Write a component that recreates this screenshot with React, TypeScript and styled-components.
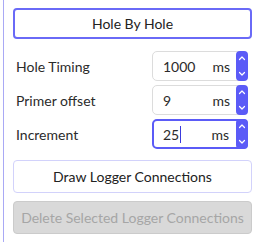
import React from "react";
import styled, { createGlobalStyle } from "styled-components";

const Global = createGlobalStyle`
  html, body { margin: 0; padding: 0; background: #ffffff; }
  body { font-family: Lato, "Noto Sans", sans-serif; color: #2b2b2b; }
`;

const Panel = styled.div`
  margin-left: 3px;
  width: 239px;
  height: 239px;
  border-left: 1px solid #a9a9f5;
  padding: 8px 0 0 9px;
  display: flex;
  flex-direction: column;
`;

const ModeButton = styled.button<{ $variant?: "primary" | "outline" | "disabled" }>`
  box-sizing: border-box;
  width: 239px;
  font-family: Lato, sans-serif;
  font-size: 14px;
  white-space: nowrap;
  border-radius: 4px;
  padding: 0;
  display: flex;
  align-items: center;
  justify-content: center;
  ${({ $variant }) =>
    $variant === "primary"
      ? `height: 31px; background:#fff; border:2px solid #6a6af7; color:#222;`
      : $variant === "disabled"
      ? `height: 33px; background:#d9d9d9; border:1px solid #cbcbcb; color:#a6a6a6;`
      : `height: 33px; background:#fff; border:1px solid #d2d2fb; color:#222;`}
`;

const Fields = styled.div`
  display: flex;
  flex-direction: column;
  gap: 4px;
  margin: 12px 0 11px;
`;

const Row = styled.div`
  display: flex;
  align-items: center;
  justify-content: space-between;
  height: 30px;
  padding-right: 4px;
`;

const Label = styled.span`
  font-size: 14px;
  padding-left: 3px;
`;

const InputBox = styled.div<{ $focused?: boolean }>`
  position: relative;
  box-sizing: border-box;
  width: 96px;
  height: 30px;
  border-radius: 5px;
  border: ${({ $focused }) => ($focused ? "2px solid #5b5bf7" : "1px solid #dcdcdc")};
  display: flex;
  align-items: center;
  padding-left: ${({ $focused }) => ($focused ? "9px" : "10px")};
  font-size: 14px;
`;

const Value = styled.span`
  flex: 1;
  display: flex;
  align-items: center;
`;

const Caret = styled.span`
  display: inline-block;
  width: 1px;
  height: 17px;
  background: #3b3bdd;
  margin-left: 1px;
`;

const Unit = styled.span`
  margin-right: 17px;
`;

const Spinner = styled.div<{ $focused?: boolean }>`
  position: absolute;
  right: ${({ $focused }) => ($focused ? "-2px" : "-1px")};
  top: ${({ $focused }) => ($focused ? "-2px" : "-1px")};
  width: 12px;
  height: 30px;
  border-radius: 4px;
  background: #5b5bf7;
  display: flex;
  flex-direction: column;
  align-items: center;
  justify-content: space-between;
  padding: 4px 0;
  box-sizing: border-box;
`;

const Chevron = ({ up }: { up?: boolean }) => (
  <svg width="8" height="6" viewBox="0 0 8 6">
    <path
      d={up ? "M1.5 4.5 L4 2 L6.5 4.5" : "M1.5 1.5 L4 4 L6.5 1.5"}
      fill="none"
      stroke="#fff"
      strokeWidth="1.2"
      strokeLinecap="round"
      strokeLinejoin="round"
    />
  </svg>
);

const NumberField = ({ value, focused }: { value: string; focused?: boolean }) => (
  <InputBox $focused={focused}>
    <Value>
      {value}
      {focused && <Caret />}
    </Value>
    <Unit>ms</Unit>
    <Spinner $focused={focused}>
      <Chevron up />
      <Chevron />
    </Spinner>
  </InputBox>
);

const Actions = styled.div`
  display: flex;
  flex-direction: column;
  gap: 8px;
`;

export default function App() {
  return (
    <>
      <Global />
      <Panel>
        <ModeButton $variant="primary">Hole By Hole</ModeButton>
        <Fields>
          <Row>
            <Label>Hole Timing</Label>
            <NumberField value="1000" />
          </Row>
          <Row>
            <Label>Primer offset</Label>
            <NumberField value="9" />
          </Row>
          <Row>
            <Label>Increment</Label>
            <NumberField value="25" focused />
          </Row>
        </Fields>
        <Actions>
          <ModeButton $variant="outline">Draw Logger Connections</ModeButton>
          <ModeButton $variant="disabled" disabled>
            Delete Selected Logger Connections
          </ModeButton>
        </Actions>
      </Panel>
    </>
  );
}
